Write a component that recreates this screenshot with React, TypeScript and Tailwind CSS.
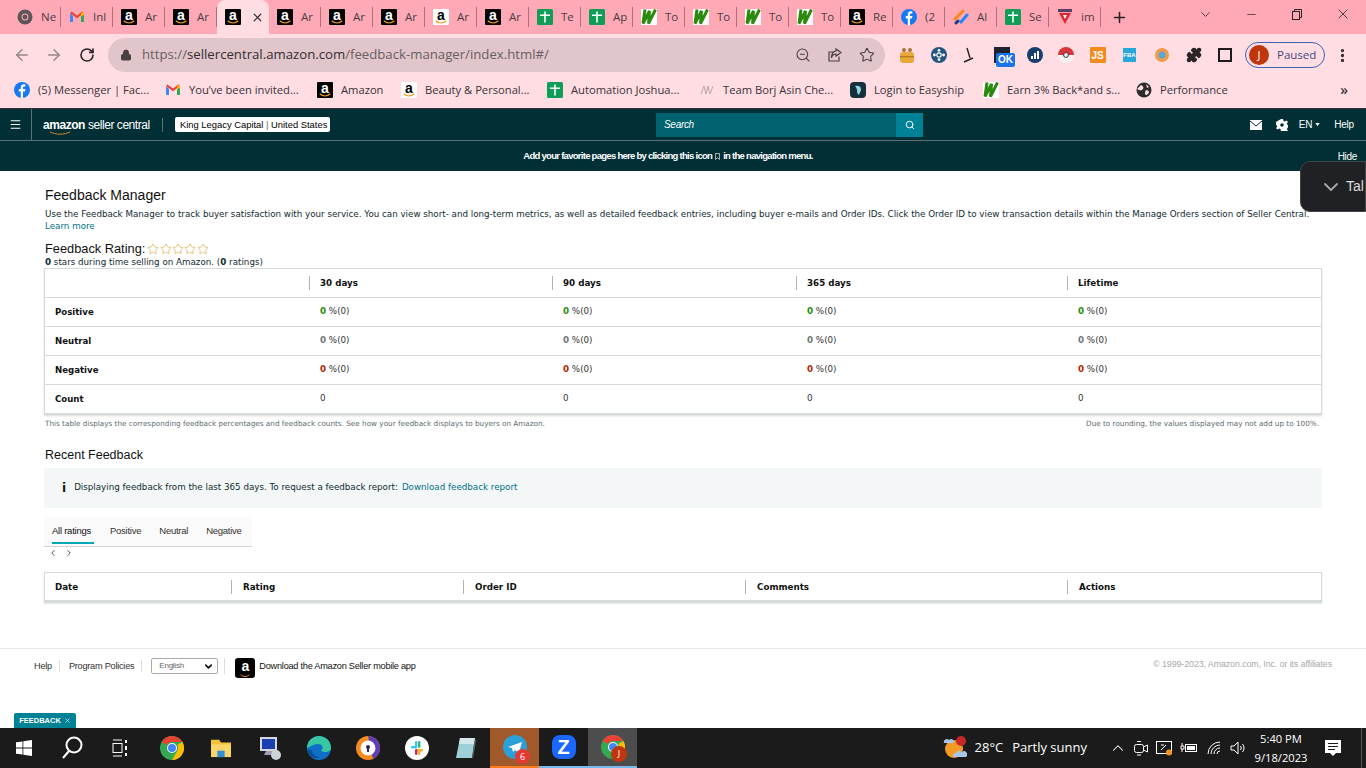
import { ChevronDown, ChevronLeft, ChevronRight, Search, ZoomOut, Star, Lock, ArrowLeft, ArrowRight, RotateCw, Plus, X, Minus, Menu, Puzzle, MoreVertical, ChevronUp } from "lucide-react";

const ui = "font-['Open_Sans','Noto_Sans',sans-serif]";
const body = "font-['DejaVu_Sans',sans-serif]";
const arial = "font-['Liberation_Sans',Arial,sans-serif]";

type FavKind = "chrome" | "gmail" | "az" | "azw" | "sheet" | "w" | "fb" | "jira" | "tri" | "easy" | "team" | "globe";

const Smile = ({ w = 12 }: { w?: number }) => (
  <svg viewBox="0 0 16 5" width={w} height={w / 3.2} className="absolute bottom-[1px] left-1/2 -translate-x-1/2">
    <path d="M1 1 C5 5 11 5 15 1" stroke="#f79b1c" strokeWidth="1.6" fill="none" />
  </svg>
);

const Fav = ({ kind }: { kind: FavKind }) => {
  if (kind === "az" || kind === "azw") {
    const black = kind === "az";
    return (
      <span className={`relative flex h-4 w-4 shrink-0 justify-center rounded-[1px] ${black ? "bg-black text-white" : "bg-white text-black"}`}>
        <span className={`${arial} text-[14px] leading-[13px] font-bold`}>a</span>
        <Smile />
      </span>
    );
  }
  if (kind === "sheet") {
    return (
      <svg viewBox="0 0 16 16" className="h-4 w-4 shrink-0">
        <rect width="16" height="16" rx="1.5" fill="#0f9d58" />
        <path d="M7.200 2.500h1.600v3H13v1.600H8.800V13.500H7.200V7.100H3V5.500h4.200z" fill="#fff" />
      </svg>
    );
  }
  if (kind === "w") {
    return (
      <svg viewBox="0 0 16 16" className="h-4 w-4 shrink-0">
        <rect width="16" height="16" fill="#fff" />
        <path d="M4 0.500 2 14.500 8.500 2 7.500 14.500 14.500 0.500" stroke="#2a8a0e" strokeWidth="3" fill="none" />
      </svg>
    );
  }
  if (kind === "fb") {
    return (
      <svg viewBox="0 0 16 16" className="h-4 w-4 shrink-0">
        <circle cx="8" cy="8" r="8" fill="#1877f2" />
        <path d="M9 16V9.500h2l.4-2.400H9V5.700c0-.8.3-1.200 1.200-1.200h1.200V2.400C11 2.300 10.400 2.200 9.800 2.200 8 2.200 6.800 3.300 6.800 5.300v1.800H4.800v2.400h2V16z" fill="#fff" />
      </svg>
    );
  }
  if (kind === "gmail") {
    return (
      <svg viewBox="0 0 16 16" className="h-4 w-4 shrink-0">
        <path d="M1 4v9h3V7z" fill="#4285f4" />
        <path d="M15 4v9h-3V7z" fill="#34a853" />
        <path d="M1 4 8 9.200 15 4l-1.600-1.600L8 6.400 2.600 2.400z" fill="#ea4335" />
        <path d="M12 7V4.400l3-2V6z" fill="#fbbc04" />
      </svg>
    );
  }
  if (kind === "chrome") {
    return (
      <svg viewBox="0 0 16 16" className="h-4 w-4 shrink-0">
        <circle cx="8" cy="8" r="7.500" fill="#5f5558" />
        <circle cx="8" cy="8" r="3.400" fill="#ffa9b7" />
        <circle cx="8" cy="8" r="2.400" fill="#5f5558" />
      </svg>
    );
  }
  if (kind === "jira") {
    return (
      <svg viewBox="0 0 16 16" className="h-4 w-4 shrink-0">
        <path d="M2 10 10 2" stroke="#f5871f" strokeWidth="3" strokeLinecap="round" />
        <path d="M8 13 14 6" stroke="#2684ff" strokeWidth="3" strokeLinecap="round" />
        <path d="M3 14 5 12" stroke="#1d3a7a" strokeWidth="3" strokeLinecap="round" />
      </svg>
    );
  }
  if (kind === "tri") {
    return (
      <svg viewBox="0 0 16 16" className="h-4 w-4 shrink-0">
        <rect x="1" y="0" width="14" height="3" fill="#5a3f6b" />
        <path d="M2 4h12L8 15z" fill="#e0262e" />
        <path d="M6 6h4L8 10z" fill="#fff" />
      </svg>
    );
  }
  if (kind === "easy") {
    return (
      <svg viewBox="0 0 16 16" className="h-4 w-4 shrink-0">
        <rect width="16" height="16" rx="4" fill="#13303c" />
        <path d="M5 4c3-1 6 0 6 3 0 3-2 4-2 6-2-1-2-4-2-5S6 5 5 4z" fill="#8fd6e0" />
      </svg>
    );
  }
  if (kind === "team") {
    return (
      <svg viewBox="0 0 16 16" className="h-4 w-4 shrink-0">
        <path d="M2 12 5 4l2 8 2-8 2 8 3-8" stroke="#b9a7a9" strokeWidth="1" fill="none" />
      </svg>
    );
  }
  return (
    <svg viewBox="0 0 16 16" className="h-4 w-4 shrink-0">
      <circle cx="8" cy="8" r="7.500" fill="#2b2b2b" />
      <path d="M5 3c2 1 3 2 2 4S3 8 3 8L1 7zM10 8c2 0 3 1 3 2s-2 3-3 3-1-2-1-3zM10 2l3 3-2 1z" fill="#ffdde3" />
    </svg>
  );
};

const tabs: { kind: FavKind; label: string; active?: boolean }[] = [
  { kind: "chrome", label: "Ne" },
  { kind: "gmail", label: "Inl" },
  { kind: "az", label: "Ar" },
  { kind: "az", label: "Ar" },
  { kind: "az", label: "", active: true },
  { kind: "az", label: "Ar" },
  { kind: "az", label: "Ar" },
  { kind: "az", label: "Ar" },
  { kind: "azw", label: "Ar" },
  { kind: "az", label: "Ar" },
  { kind: "sheet", label: "Te" },
  { kind: "sheet", label: "Ap" },
  { kind: "w", label: "To" },
  { kind: "w", label: "To" },
  { kind: "w", label: "To" },
  { kind: "w", label: "To" },
  { kind: "az", label: "Re" },
  { kind: "fb", label: "(2" },
  { kind: "jira", label: "Al" },
  { kind: "sheet", label: "Se" },
  { kind: "tri", label: "im" },
];

const bookmarks: { kind: FavKind; label: string; cls: string }[] = [
  { kind: "fb", label: "(5) Messenger | Fac...", cls: "w-[151px]" },
  { kind: "gmail", label: "You’ve been invited...", cls: "w-[152px]" },
  { kind: "az", label: "Amazon", cls: "w-[84px]" },
  { kind: "azw", label: "Beauty & Personal...", cls: "w-[146px]" },
  { kind: "sheet", label: "Automation Joshua...", cls: "w-[152px]" },
  { kind: "team", label: "Team Borj Asin Che...", cls: "w-[151px]" },
  { kind: "easy", label: "Login to Easyship", cls: "w-[133px]" },
  { kind: "w", label: "Earn 3% Back*and s...", cls: "w-[153px]" },
  { kind: "globe", label: "Performance", cls: "w-[100px]" },
];

const TabStrip = () => (
  <div className={`${ui} flex h-[34px] shrink-0 bg-[#ffa9b7] pl-[9px] text-[11.5px] text-[#4a3c40]`}>
    {tabs.map((t, i) =>
      t.active ? (
        <div key={i} className="flex h-[34px] w-[52px] shrink-0 items-center gap-[10px] rounded-t-[8px] bg-[#ffdde3] pl-[8px]">
          <Fav kind={t.kind} />
          <X size={13} strokeWidth={2.2} className="text-[#333]" />
        </div>
      ) : (
        <div key={i} className="flex h-[34px] w-[52px] shrink-0 items-center">
          <div className="flex h-5 w-full items-center gap-2 overflow-hidden border-r border-[#a9747f] pl-[8px]">
            <Fav kind={t.kind} />
            <span className="whitespace-nowrap">{t.label}</span>
          </div>
        </div>
      )
    )}
    <div className="ml-[10px] flex items-center">
      <Plus size={17} strokeWidth={2.2} className="text-[#2a2326]" />
    </div>
    <div className="ml-auto flex items-start text-[#2a2326]">
      <div className="flex h-7 w-[46px] items-center justify-center">
        <ChevronDown size={15} strokeWidth={1.3} />
      </div>
      <div className="flex h-7 w-[46px] items-center justify-center">
        <Minus size={13} strokeWidth={1.3} />
      </div>
      <div className="flex h-7 w-[46px] items-center justify-center">
        <svg viewBox="0 0 12 12" className="h-3 w-3" fill="none" stroke="currentColor">
          <rect x="1.500" y="3.500" width="7" height="8" />
          <path d="M3.500 3.500v-2h7v8h-2" />
        </svg>
      </div>
      <div className="flex h-7 w-[46px] items-center justify-center">
        <X size={16} strokeWidth={1.2} />
      </div>
    </div>
  </div>
);

const Toolbar = () => (
  <div className="flex h-[42px] shrink-0 items-center bg-[#ffdde3] text-[#4a3f43]">
    <ArrowLeft size={18} className="ml-[13px] text-[#96878b]" strokeWidth={2} />
    <ArrowRight size={18} className="ml-[14px] text-[#96878b]" strokeWidth={2} />
    <RotateCw size={16} className="ml-[16px] text-[#2b2528]" strokeWidth={2.4} />
    <div className={`${ui} ml-[13px] flex h-[34px] w-[777px] items-center rounded-full bg-[#e0c6ca] text-[13.2px]`}>
      <Lock size={12} className="ml-[12px] fill-[#4a3f43]" />
      <span className="ml-[10px] text-[#6a5e62]">
        https://<span className="text-[#332c2f]">sellercentral.amazon.com</span>/feedback-manager/index.html#/
      </span>
      <ZoomOut size={16} strokeWidth={1.6} className="ml-auto" />
      <svg viewBox="0 0 16 16" className="ml-[16px] h-4 w-4" fill="none" stroke="currentColor" strokeWidth="1.2">
        <path d="M12 9.500V14H2V5h4M9 2l5 3.500L9 9V7C6 7 5 8.500 4.500 11 4.500 7 6 4 9 4z" />
      </svg>
      <Star size={16} strokeWidth={1.6} className="ml-[16px] mr-[10px]" />
    </div>
    <div className="ml-[6px] flex items-center">
      <div className="flex w-[32px] justify-center">
        <svg viewBox="0 0 18 18" className="h-[18px] w-[18px]">
          <circle cx="6" cy="4" r="2" fill="#a87436" />
          <circle cx="12" cy="4" r="2" fill="#a87436" />
          <rect x="2" y="6" width="14" height="11" rx="3" fill="#e8a93a" />
          <rect x="2" y="10" width="14" height="1.400" fill="#b67c1e" />
        </svg>
      </div>
      <div className="flex w-[31px] justify-center">
        <svg viewBox="0 0 16 16" className="h-4 w-4">
          <circle cx="8" cy="8" r="8" fill="#24557f" />
          <circle cx="8" cy="8" r="2.200" fill="none" stroke="#fff" strokeWidth="1.200" />
          <circle cx="8" cy="3.400" r="1.400" fill="#fff" />
          <circle cx="8" cy="12.600" r="1.400" fill="#fff" />
          <circle cx="3.400" cy="8" r="1.400" fill="#fff" />
          <circle cx="12.600" cy="8" r="1.400" fill="#fff" />
        </svg>
      </div>
      <div className="flex w-[30px] justify-center">
        <svg viewBox="0 0 16 16" className="h-4 w-4">
          <path d="M6 1 9 11M3 15l9-4" stroke="#222" strokeWidth="1.400" fill="none" />
        </svg>
      </div>
      <div className="relative flex w-[35px] justify-center">
        <span className="h-4 w-4 bg-[#1c2230]" />
        <span className={`${arial} absolute top-[6px] left-[12px] rounded-[2px] bg-[#1a73e8] px-[2px] text-[10px] leading-[14px] font-bold text-white`}>OK</span>
      </div>
      <div className="flex w-[31px] justify-center">
        <svg viewBox="0 0 16 16" className="h-4 w-4">
          <circle cx="8" cy="8" r="8" fill="#173f6d" />
          <path d="M4 9h2v3H4zM7 6h2v6H7zM10 4h2v8h-2z" fill="#fff" />
        </svg>
      </div>
      <div className="flex w-[32px] justify-center">
        <svg viewBox="0 0 16 16" className="h-4 w-4">
          <circle cx="8" cy="8" r="8" fill="#f2f2f2" />
          <path d="M0 8a8 8 0 0 1 16 0z" fill="#d8343a" />
          <circle cx="8" cy="8" r="2.400" fill="#fff" stroke="#333" />
        </svg>
      </div>
      <div className="flex w-[31px] justify-center">
        <span className={`${arial} flex h-4 w-4 items-center justify-center rounded-[1px] bg-[#f58a1f] text-[10px] font-bold text-white`}>JS</span>
      </div>
      <div className="flex w-[33px] justify-center">
        <span className={`${arial} flex h-[14px] w-[13px] items-center justify-center bg-[#27a8d8] text-[6px] font-bold text-white`}>FBA</span>
      </div>
      <div className="flex w-[32px] justify-center">
        <svg viewBox="0 0 16 16" className="h-4 w-4">
          <circle cx="8" cy="8" r="7" fill="#f09a45" />
          <circle cx="8" cy="8" r="3.400" fill="#58a6dc" />
        </svg>
      </div>
      <div className="flex w-[31px] justify-center">
        <Puzzle size={16} className="fill-[#2b2528] text-[#2b2528]" />
      </div>
      <div className="flex w-[31px] justify-center">
        <span className="flex h-[14px] w-[14px] justify-end border-2 border-[#1f1a1c]">
          <span className="h-full w-[6px] bg-[#ffdde3]" />
        </span>
      </div>
      <div className={`${ui} ml-[5px] flex h-[26px] w-[80px] items-center gap-[8px] rounded-full border border-[#3b62b4] pl-[3px] text-[11.5px] text-[#3c4a7c]`}>
        <span className="flex h-[20px] w-[20px] items-center justify-center rounded-full bg-[#bf360c] text-[11px] text-white">J</span>
        Paused
      </div>
      <MoreVertical size={17} strokeWidth={2.6} className="ml-[9px] text-[#2b2528]" />
    </div>
  </div>
);

const BookmarksBar = () => (
  <div className={`${ui} flex h-[33px] shrink-0 items-center border-b border-[#3a2f33] bg-[#ffdde3] pb-[4px] pl-[14px] text-[11.2px] text-[#3a3236]`}>
    {bookmarks.map((b) => (
      <div key={b.label} className={`flex shrink-0 items-center gap-2 ${b.cls}`}>
        <Fav kind={b.kind} />
        <span className="whitespace-nowrap">{b.label}</span>
      </div>
    ))}
    <span className="ml-auto mr-[18px] text-[14px] leading-none font-semibold">»</span>
  </div>
);

const TopNav = () => (
  <div className={`${arial} shrink-0 bg-[#002f36] text-white`}>
    <div className="flex h-[32px] items-center border-b border-[#5b7378]">
      <div className="flex h-full w-[32px] items-center justify-center border-r border-[#5b7378]">
        <Menu size={13} strokeWidth={2} />
      </div>
      <div className="relative ml-[11px] flex w-[107px] items-baseline text-[12px] leading-none tracking-[-0.45px]">
        <span className="font-bold">amazon</span>
        <span className="ml-[3px] whitespace-nowrap">seller central</span>
        <svg viewBox="0 0 28 5" className="absolute top-[12px] left-[6px] h-[4px] w-[22px]">
          <path d="M1 1c8 4 18 4 26 0" stroke="#e88a1a" strokeWidth="1.200" fill="none" />
        </svg>
      </div>
      <span className="ml-[12px] h-[14px] w-px bg-[#5b7378]" />
      <div className="ml-[12px] w-[155px] rounded-[2px] bg-white pl-[5px] text-[9.4px] leading-[15px] whitespace-nowrap text-black">
        King Legacy Capital <span className="text-[#666]">|</span> United States
      </div>
      <div className="ml-[326px] flex h-[24px] w-[267px]">
        <div className="flex flex-1 items-center bg-[#00626f] pl-[8px] text-[10px] tracking-[-0.3px] text-white italic">Search</div>
        <div className="flex w-[27px] items-center justify-center bg-[#008296]">
          <Search size={10} strokeWidth={2.4} />
        </div>
      </div>
      <div className="ml-auto flex items-center pr-[12px] text-[10px] tracking-[-0.2px]">
        <svg viewBox="0 0 12 10" className="h-[10px] w-[12px]">
          <path d="M0 0h12v10H0z" fill="#fff" />
          <path d="M0 1 6 6l6-5" stroke="#002f36" strokeWidth="1" fill="none" />
        </svg>
        <svg viewBox="0 0 12 12" className="ml-[14px] h-3 w-3">
          <path d="M5 0h2l.4 1.800 1.500.6 1.600-1 1.400 1.400-1 1.600.6 1.500 1.800.4v2l-1.800.4-.6 1.500 1 1.600-1.400 1.400-1.600-1-1.500.6L7 12H5l-.4-1.800-1.500-.6-1.600 1L.1 9.200l1-1.600-.6-1.500L-1 5.700v-2" fill="#fff" />
          <circle cx="6" cy="6" r="1.800" fill="#002f36" />
        </svg>
        <span className="ml-[11px]">EN</span>
        <svg viewBox="0 0 6 4" className="ml-[3px] h-[3px] w-[5px]">
          <path d="M0 0h6L3 4z" fill="#fff" />
        </svg>
        <span className="ml-[14px]">Help</span>
      </div>
    </div>
    <div className="relative flex h-[30px] items-center justify-center pr-[30px] text-[9.5px] tracking-[-0.72px]">
      <span className="flex items-center whitespace-pre font-bold">
        Add your favorite pages here by clicking this icon
        <svg viewBox="0 0 6 8" className="mx-[3px] h-[7px] w-[5px]">
          <path d="M.5.500h5v7L3 5.500.5 7.500z" fill="none" stroke="#fff" strokeWidth="0.800" />
        </svg>
        in the navigation menu.
      </span>
      <span className="absolute right-[9px] top-[8px] text-[10px] tracking-[-0.3px]">Hide</span>
    </div>
  </div>
);

const ratingCols = ["30 days", "90 days", "365 days", "Lifetime"];
const gridCols = "grid grid-cols-[264px_243px_244px_271px_1fr]";

const RatingRow = ({ label, cls }: { label: string; cls: string }) => (
  <div className={`${gridCols} h-[29px] items-center border-t border-[#d5dbdb]`}>
    <span className="pl-[10px] text-[8.6px] font-bold text-[#0f1111]">{label}</span>
    {ratingCols.map((c) => (
      <span key={c} className="pl-[11px] text-[#333]">
        <b className={cls}>0</b> %(0)
      </span>
    ))}
  </div>
);

const RatingTable = () => (
  <div className="border border-[#d5dbdb] border-b-[2px] shadow-[0_1px_2px_rgba(0,0,0,0.15)]">
    <div className={`${gridCols} h-[28px] items-center`}>
      <span />
      {ratingCols.map((c) => (
        <span key={c} className="border-l border-[#aab7b8] pl-[10px] leading-[14px] font-bold text-[#0f1111]">{c}</span>
      ))}
    </div>
    <RatingRow label="Positive" cls="text-[#2a8a0e]" />
    <RatingRow label="Neutral" cls="text-[#6c7778]" />
    <RatingRow label="Negative" cls="text-[#b12704]" />
    <div className={`${gridCols} h-[29px] items-center border-t border-[#d5dbdb]`}>
      <span className="pl-[10px] text-[8.6px] font-bold text-[#0f1111]">Count</span>
      {ratingCols.map((c) => (
        <span key={c} className="pl-[11px] text-[#333]">0</span>
      ))}
    </div>
  </div>
);

const Stars = () => (
  <span className="ml-[2px] flex gap-[0.3px]">
    {[0, 1, 2, 3, 4].map((i) => (
      <Star key={i} size={12} strokeWidth={1.2} className="text-[#d99a2b]" />
    ))}
  </span>
);

const Content = () => (
  <div className={`${body} flex-1 overflow-hidden bg-white px-[44px] text-[8.72px] text-[#0f2a30]`}>
    <h1 className={`${arial} mt-[15px] ml-px text-[14px] leading-[18px] text-[#0f1111]`}>Feedback Manager</h1>
    <p className="mt-[4px] ml-px whitespace-nowrap leading-[12px]">
      Use the Feedback Manager to track buyer satisfaction with your service. You can view short- and long-term metrics, as well as detailed feedback entries, including buyer e-mails and Order IDs. Click the Order ID to view transaction details within the Manage Orders section of Seller Central.
    </p>
    <a className="ml-px block leading-[12px] text-[#007185]">Learn more</a>
    <div className={`${arial} mt-[9px] ml-px flex items-center text-[12.8px] leading-[15px] text-[#0f1111]`}>
      Feedback Rating:
      <Stars />
    </div>
    <p className="ml-px leading-[12px]"><b>0</b> stars during time selling on Amazon. (<b>0</b> ratings)</p>
    <RatingTable />
    <div className="mt-[3px] flex justify-between pr-[3px] pl-[1px] text-[7.25px] leading-[11px] text-[#5b6b6f]">
      <span>This table displays the corresponding feedback percentages and feedback counts. See how your feedback displays to buyers on Amazon.</span>
      <span>Due to rounding, the values displayed may not add up to 100%.</span>
    </div>
    <h2 className={`${arial} mt-[18px] ml-px text-[12.5px] leading-[16px] text-[#0f1111]`}>Recent Feedback</h2>
    <div className="mt-[5px] flex h-[40px] items-center bg-[#f3f7f8] pl-[18px]">
      <span className="mr-[8px] text-[12px] leading-none font-bold text-[#111]">i</span>
      <span>Displaying feedback from the last 365 days. To request a feedback report:</span>
      <a className="ml-[4px] text-[#007185]">Download feedback report</a>
    </div>
    <div className={`${arial} mt-[9px] flex h-[30px] w-[208px] items-start gap-[18px] border-b border-[#cfd4d4] bg-[#fafafa] pl-[8px] pt-[8px] text-[9.5px] leading-[12px] tracking-[-0.25px] text-[#333]`}>
      <span className="h-[19px] w-[42px] border-b-[2px] border-[#00a8b5] whitespace-nowrap text-[#0f1111]">All ratings</span>
      <span className="-ml-[2px]">Positive</span>
      <span>Neutral</span>
      <span>Negative</span>
    </div>
    <div className="flex h-[12px] items-center gap-[6px] pl-[4px] text-[#333]">
      <ChevronLeft size={10} strokeWidth={2} />
      <ChevronRight size={10} strokeWidth={2} />
    </div>
    <div className="mt-[13px] grid h-[31px] grid-cols-[186px_232px_282px_322px_1fr] items-center border border-[#d5dbdb] border-b-[3px] font-bold text-[#0f1111] shadow-[0_1px_2px_rgba(0,0,0,0.1)]">
      <span className="pl-[10px] leading-[14px]">Date</span>
      <span className="border-l border-[#aab7b8] pl-[11px] leading-[14px]">Rating</span>
      <span className="border-l border-[#aab7b8] pl-[11px] leading-[14px]">Order ID</span>
      <span className="border-l border-[#aab7b8] pl-[11px] leading-[14px]">Comments</span>
      <span className="border-l border-[#aab7b8] pl-[11px] leading-[14px]">Actions</span>
    </div>
  </div>
);

const Footer = () => (
  <div className={`${arial} flex h-[80px] shrink-0 items-start border-t border-[#e7e7e7] bg-white pt-[9px] pr-[34px] pl-[34px] text-[9.2px] tracking-[-0.25px] text-[#333]`}>
    <span className="mt-[2px] border-r border-[#ddd] pr-[7px] leading-[12px]">Help</span>
    <span className="mt-[2px] ml-[9px] border-r border-[#ddd] pr-[7px] leading-[12px]">Program Policies</span>
    <div className="ml-[9px] flex h-[16px] w-[67px] items-center justify-between rounded-[2px] border border-[#aaa] pr-[3px] pl-[7px] text-[8px] text-[#666]">
      English
      <ChevronDown size={11} strokeWidth={3.5} className="text-[#111]" />
    </div>
    <span className="ml-[6px] h-[16px] w-px bg-[#ddd]" />
    <span className="relative ml-[10px] flex h-[20px] w-[20px] justify-center rounded-[3px] bg-black text-white">
      <span className="text-[14px] leading-[16px] font-bold">a</span>
      <Smile w={10} />
    </span>
    <span className="mt-[2px] ml-[4px] leading-[12px] text-[#111]">Download the Amazon Seller mobile app</span>
    <span className="ml-auto text-[8.9px] leading-[12px] tracking-[-0.1px] text-[#a9a9a9]">© 1999-2023, Amazon.com, Inc. or its affiliates</span>
  </div>
);

const TaskCell = ({ children, cls = "" }: { children: React.ReactNode; cls?: string }) => (
  <div className={`relative flex h-10 w-[49px] shrink-0 items-center justify-center ${cls}`}>{children}</div>
);

const ChromeIcon = () => (
  <svg viewBox="0 0 24 24" className="h-6 w-6">
    <circle cx="12" cy="12" r="12" fill="#34a853" />
    <path d="M12 0a12 12 0 0 1 10.400 6H12a6 6 0 0 0-5.200 3L1.600 6A12 12 0 0 1 12 0z" fill="#ea4335" />
    <path d="M22.400 6A12 12 0 0 1 12 24l5.200-9a6 6 0 0 0 0-6z" fill="#fbbc04" />
    <circle cx="12" cy="12" r="5" fill="#fff" />
    <circle cx="12" cy="12" r="4" fill="#4285f4" />
  </svg>
);

const Taskbar = () => (
  <div className={`${ui} flex h-10 shrink-0 items-center bg-[#1b1b1b] text-white`}>
    <div className="flex h-10 w-[48px] items-center justify-center">
      <svg viewBox="0 0 16 16" className="h-4 w-4" fill="#fff">
        <path d="M0 2.300 6.500 1.400v6.200H0zM7.300 1.300 16 0v7.600H7.300zM0 8.400h6.500v6.200L0 13.700zM7.300 8.400H16V16l-8.700-1.300z" />
      </svg>
    </div>
    <div className="flex h-10 w-[48px] items-center justify-center">
      <svg viewBox="0 0 22 24" className="h-[24px] w-[22px]" fill="none" stroke="#fff" strokeWidth="2">
        <circle cx="13" cy="9" r="7.500" />
        <path d="M8 15 2 22" />
      </svg>
    </div>
    <div className="flex h-10 w-[51px] items-center justify-center pr-[3px]">
      <svg viewBox="0 0 16 18" className="h-[18px] w-4" fill="none" stroke="#fff" strokeWidth="1">
        <path d="M1 1h9M1 17h9" />
        <rect x="1" y="4.500" width="9" height="9" />
        <path d="M14 1v3M14 7v4M14 14v3" strokeWidth="2" />
      </svg>
    </div>
    <TaskCell><ChromeIcon /></TaskCell>
    <TaskCell>
      <svg viewBox="0 0 24 22" className="h-[20px] w-[22px]">
        <path d="M1 2h9l2 3h11v16H1z" fill="#f3c13a" />
        <rect x="1" y="7" width="22" height="14" fill="#f8d568" />
        <rect x="8" y="14" width="8" height="7" fill="#2f8fd8" />
      </svg>
    </TaskCell>
    <TaskCell>
      <svg viewBox="0 0 24 24" className="h-6 w-6">
        <rect x="2" y="1" width="17" height="14" fill="#d5d8de" />
        <rect x="4" y="3" width="13" height="10" fill="#1b3fb0" />
        <path d="M8 15h7l2 4H6z" fill="#9aa0a8" />
        <circle cx="18" cy="19" r="5" fill="#cfd3d6" />
      </svg>
    </TaskCell>
    <TaskCell>
      <svg viewBox="0 0 24 24" className="h-6 w-6">
        <circle cx="12" cy="12" r="12" fill="#0f6fc6" />
        <path d="M0 12A12 12 0 0 1 24 12c0 3-3 4-6 4-2 0-4-1-4-2 3-1 2-6-3-6-5 0-8 3-11 4z" fill="#38c6a3" />
        <path d="M5 14c0 4 3 7 8 7-6 3-12-2-12-7z" fill="#0a4c96" />
      </svg>
    </TaskCell>
    <TaskCell>
      <svg viewBox="0 0 24 24" className="h-6 w-6">
        <circle cx="12" cy="12" r="12" fill="#f58a1f" />
        <path d="M12 0a12 12 0 0 1 12 12c0 5-3 9-7 11z" fill="#5e3fb8" />
        <circle cx="12" cy="12" r="7.500" fill="#fff" />
        <circle cx="12" cy="11" r="2" fill="#2a2a55" />
        <rect x="11" y="12" width="2" height="4" fill="#2a2a55" />
      </svg>
    </TaskCell>
    <TaskCell>
      <svg viewBox="0 0 24 24" className="h-6 w-6">
        <circle cx="12" cy="12" r="12" fill="#fff" />
        <rect x="6" y="10" width="6" height="2.400" rx="1.200" fill="#36c5f0" />
        <rect x="10" y="5" width="2.400" height="6" rx="1.200" fill="#36c5f0" />
        <rect x="13" y="5" width="2.400" height="7" rx="1.200" fill="#2eb67d" />
        <rect x="12" y="13" width="6" height="2.400" rx="1.200" fill="#ecb22e" />
        <rect x="10" y="13" width="2.400" height="6" rx="1.200" fill="#e01e5a" />
        <rect x="13" y="14" width="2.400" height="5" rx="1.200" fill="#ecb22e" />
      </svg>
    </TaskCell>
    <TaskCell>
      <svg viewBox="0 0 24 24" className="h-6 w-6">
        <path d="M6 2h15l-3 20H2z" fill="#9fd0d8" />
        <path d="M6 2h15l-1 6H5z" fill="#d5e9ec" />
        <path d="M18 22l3-20 1 3-3 17z" fill="#5b6a5a" />
      </svg>
    </TaskCell>
    <TaskCell cls="bg-[#a0592a] border-b-2 border-[#ff7a1a]">
      <svg viewBox="0 0 24 24" className="h-6 w-6">
        <circle cx="12" cy="12" r="12" fill="#2a9fd8" />
        <path d="M5 12 19 7l-3 11-4-3-2 2-1-4z" fill="#fff" />
      </svg>
      <span className="absolute top-[21px] left-[25px] flex h-[15px] w-[15px] items-center justify-center rounded-full bg-[#e53935] text-[9px]">6</span>
    </TaskCell>
    <TaskCell cls="border-b-2 border-[#76b9ed]">
      <span className={`${arial} flex h-6 w-6 items-center justify-center rounded-[8px] bg-[#1a66ff] text-[20px] font-bold`}>Z</span>
    </TaskCell>
    <TaskCell cls="bg-[#4d4d4d] border-b-2 border-[#76b9ed]">
      <ChromeIcon />
      <span className="absolute top-[18px] left-[23px] flex h-4 w-4 items-center justify-center rounded-full bg-[#bf360c] text-[9px]">J</span>
    </TaskCell>
    <div className="ml-auto flex h-10 items-center pr-[4px]">
      <svg viewBox="0 0 24 24" className="h-6 w-6">
        <circle cx="11" cy="13" r="9" fill="#f59a23" />
        <path d="M1 7h10a3 3 0 0 0-5-3 3 3 0 0 0-5 3zM10 21h13a3 3 0 0 0-4-5 3.500 3.500 0 0 0-6 1 3 3 0 0 0-3 4z" fill="#a8c6e8" />
        <circle cx="18" cy="5" r="5" fill="#c62828" />
      </svg>
      <span className="ml-[8px] text-[13px]">28°C</span>
      <span className="ml-[9px] text-[13px]">Partly sunny</span>
      <ChevronUp size={18} strokeWidth={1.4} className="ml-[22px]" />
      <svg viewBox="0 0 16 16" className="ml-[6px] h-4 w-4" fill="none" stroke="#fff">
        <rect x="1.500" y="4.500" width="9" height="8" rx="2" />
        <path d="M10.500 7 14.500 5v7l-4-2M4 1.500h4M4 15h4" />
      </svg>
      <svg viewBox="0 0 18 16" className="ml-[7px] h-4 w-[18px]" fill="none" stroke="#fff">
        <rect x="0.500" y="1.500" width="15" height="12" />
        <path d="M5 10l5-5M5 5h3" />
        <circle cx="13" cy="12.500" r="3" fill="#f7941d" stroke="none" />
      </svg>
      <svg viewBox="0 0 18 12" className="ml-[6px] h-3 w-[18px]" fill="none" stroke="#fff">
        <rect x="5.500" y="2.500" width="11" height="7" />
        <rect x="7" y="4" width="8" height="4" fill="#fff" stroke="none" />
        <path d="M1 4h3v3H1zM2 1v3M2 7v3" />
      </svg>
      <svg viewBox="0 0 16 14" className="ml-[9px] h-[14px] w-4" fill="none" stroke="#fff">
        <path d="M1 13a12 12 0 0 1 12-12M4 13a9 9 0 0 1 9-9M7 13a6 6 0 0 1 6-6M10 13a3 3 0 0 1 3-3" />
      </svg>
      <svg viewBox="0 0 16 14" className="ml-[7px] h-[14px] w-4" fill="none" stroke="#fff">
        <path d="M1 5h3l4-4v12L4 9H1zM10.500 5a3 3 0 0 1 0 4M12.500 3a6 6 0 0 1 0 8" />
      </svg>
      <div className="ml-[8px] flex w-[54px] flex-col items-center text-[11.2px] leading-[19px]">
        <span>5:40 PM</span>
        <span>9/18/2023</span>
      </div>
      <div className="flex w-[50px] justify-center">
        <svg viewBox="0 0 16 16" className="h-4 w-4">
          <path d="M0 0h16v13h-5l-3 3-3-3H0z" fill="#fff" />
          <path d="M3 3.500h10M3 6.500h10M3 9.500h7" stroke="#1b1b1b" strokeWidth="1" />
        </svg>
      </div>
      <span className="ml-[3px] h-10 w-px bg-[#555]" />
    </div>
  </div>
);

export default function App() {
  return (
    <div className="relative flex h-[768px] w-[1366px] flex-col overflow-hidden bg-white">
      <TabStrip />
      <Toolbar />
      <BookmarksBar />
      <TopNav />
      <Content />
      <Footer />
      <Taskbar />

      {/* overlays */}
      <div className={`${arial} absolute top-[161px] right-0 flex h-[51px] w-[66px] items-center overflow-hidden rounded-l-[10px] border border-[#444] bg-[#202124] pl-[18px] text-[14px] text-[#ddd]`}>
        <ChevronDown size={24} strokeWidth={1.8} className="shrink-0 text-[#aaa]" />
        <span className="ml-[3px]">Tal</span>
      </div>
      <div className={`${arial} absolute top-[713px] left-[14px] flex h-[15px] w-[62px] items-center justify-center gap-[3px] rounded-t-[2px] bg-[#008296] text-[7.5px] font-bold text-white`}>
        FEEDBACK
        <X size={7} strokeWidth={2} />
      </div>
    </div>
  );
}
